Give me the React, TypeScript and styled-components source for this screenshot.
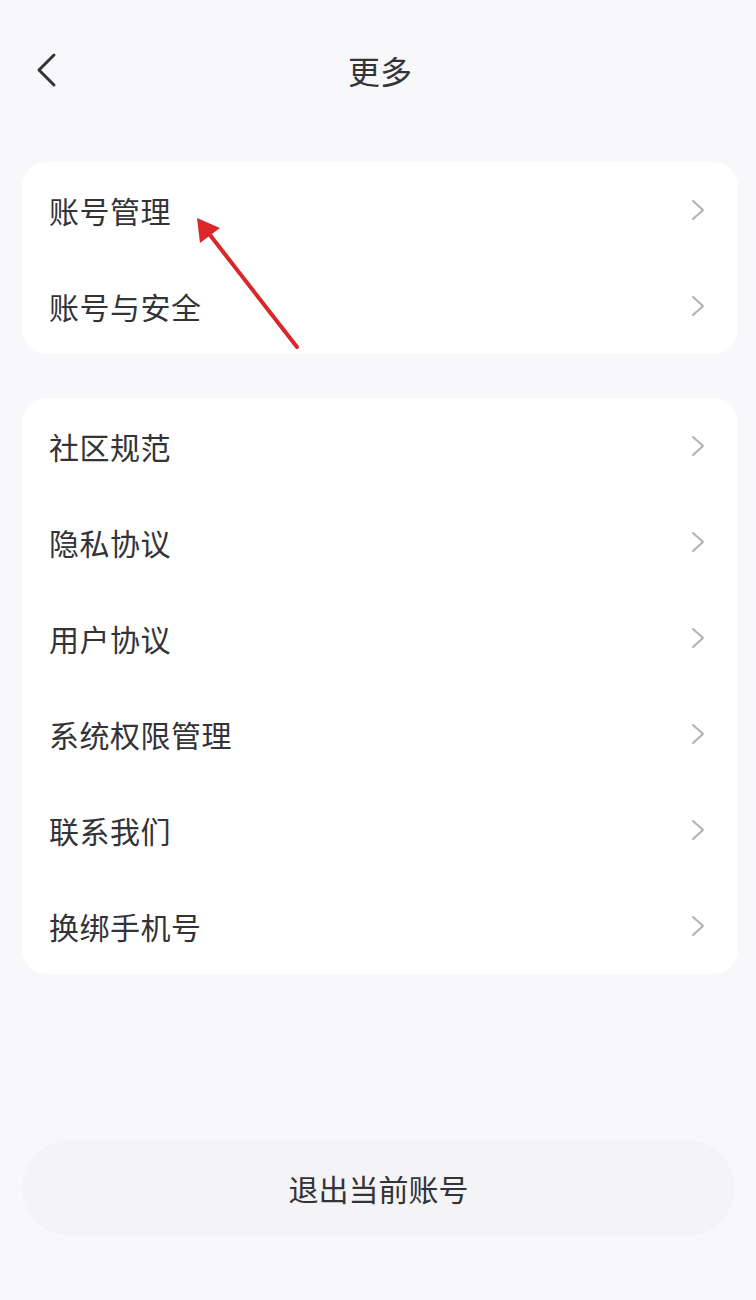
import React from 'react';
import styled, { createGlobalStyle } from 'styled-components';

const GlobalStyle = createGlobalStyle`
  body {
    margin: 0;
    background: #f8f8fa;
    font-family: "Noto Sans CJK SC", "Noto Sans", sans-serif;
  }
`;

const Page = styled.div`
  position: relative;
  width: 756px;
  min-height: 1300px;
  padding: 0 18px 0 22px;
  box-sizing: border-box;
  display: flex;
  flex-direction: column;
`;

const Header = styled.div`
  height: 140px;
  display: flex;
  align-items: center;
  justify-content: center;
  position: relative;
  margin-bottom: 22px;
`;

const Back = styled.div`
  position: absolute;
  left: 12px;
  top: 52px;
  width: 24px;
  height: 36px;
`;

const Title = styled.div`
  font-size: 32px;
  color: #333338;
  margin-top: 0;
`;

const Card = styled.div<{ $gap?: number }>`
  background: #ffffff;
  border-radius: 24px;
  margin-bottom: ${(p) => p.$gap ?? 0}px;
  display: flex;
  flex-direction: column;
`;

const Row = styled.div`
  height: 96px;
  display: flex;
  align-items: center;
  justify-content: space-between;
  padding: 0 32px 0 27px;
`;

const Label = styled.span`
  font-size: 30px;
  color: #333338;
  letter-spacing: 0.5px;
`;

const Logout = styled.div`
  margin-top: 166px;
  height: 96px;
  border-radius: 48px;
  background: #f4f4f7;
  display: flex;
  align-items: center;
  justify-content: center;
  font-size: 30px;
  color: #333338;
  margin-right: 3px;
`;

const Arrow = styled.svg`
  position: absolute;
  left: 0;
  top: 0;
  pointer-events: none;
`;

const Chevron = () => (
  <svg width="16" height="24" viewBox="0 0 16 24">
    <path d="M3 3 L13 12 L3 21" fill="none" stroke="#b0b0b4" strokeWidth="2" strokeLinecap="round" strokeLinejoin="round" />
  </svg>
);

const groupA = ['账号管理', '账号与安全'];
const groupB = ['社区规范', '隐私协议', '用户协议', '系统权限管理', '联系我们', '换绑手机号'];

export default function App() {
  return (
    <>
      <GlobalStyle />
      <Page>
        <Header>
          <Back>
            <svg width="24" height="36" viewBox="0 0 24 36">
              <path d="M20 3 L5 18 L20 33" fill="none" stroke="#333338" strokeWidth="3" strokeLinecap="round" strokeLinejoin="round" />
            </svg>
          </Back>
          <Title>更多</Title>
        </Header>
        <Card $gap={44}>
          {groupA.map((t) => (
            <Row key={t}>
              <Label>{t}</Label>
              <Chevron />
            </Row>
          ))}
        </Card>
        <Card>
          {groupB.map((t) => (
            <Row key={t}>
              <Label>{t}</Label>
              <Chevron />
            </Row>
          ))}
        </Card>
        <Logout>退出当前账号</Logout>
        <Arrow width="756" height="400" viewBox="0 0 756 400">
          <line x1="297" y1="347" x2="210" y2="235" stroke="#d9272a" strokeWidth="4" strokeLinecap="round" />
          <polygon points="197,218 200,243 220,228" fill="#d9272a" />
        </Arrow>
      </Page>
    </>
  );
}
